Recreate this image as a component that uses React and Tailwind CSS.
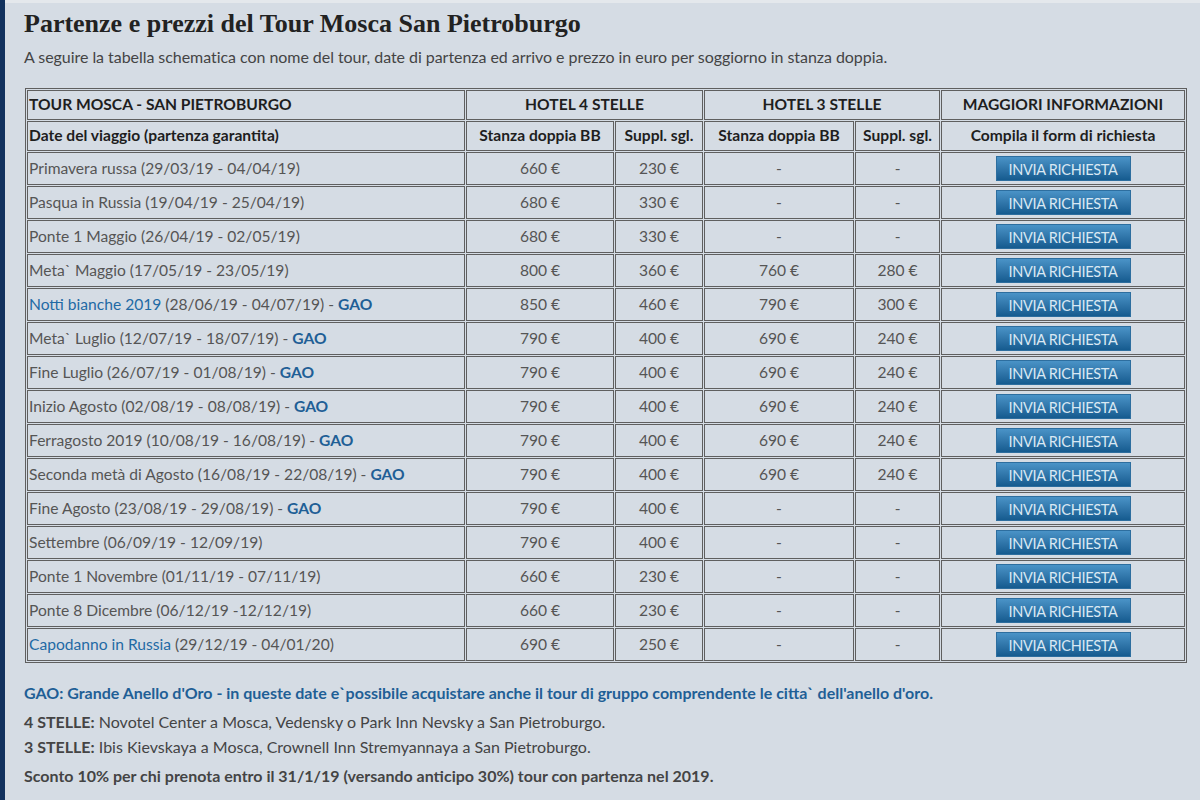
import React from "react";

const rows = [
  { name: "Primavera russa", link: false, date: "(29/03/19 - 04/04/19)", gao: false, a: "660 €", b: "230 €", c: "-", d: "-" },
  { name: "Pasqua in Russia", link: false, date: "(19/04/19 - 25/04/19)", gao: false, a: "680 €", b: "330 €", c: "-", d: "-" },
  { name: "Ponte 1 Maggio", link: false, date: "(26/04/19 - 02/05/19)", gao: false, a: "680 €", b: "330 €", c: "-", d: "-" },
  { name: "Meta` Maggio", link: false, date: "(17/05/19 - 23/05/19)", gao: false, a: "800 €", b: "360 €", c: "760 €", d: "280 €" },
  { name: "Notti bianche 2019", link: true, date: "(28/06/19 - 04/07/19)", gao: true, a: "850 €", b: "460 €", c: "790 €", d: "300 €" },
  { name: "Meta` Luglio", link: false, date: "(12/07/19 - 18/07/19)", gao: true, a: "790 €", b: "400 €", c: "690 €", d: "240 €" },
  { name: "Fine Luglio", link: false, date: "(26/07/19 - 01/08/19)", gao: true, a: "790 €", b: "400 €", c: "690 €", d: "240 €" },
  { name: "Inizio Agosto", link: false, date: "(02/08/19 - 08/08/19)", gao: true, a: "790 €", b: "400 €", c: "690 €", d: "240 €" },
  { name: "Ferragosto 2019", link: false, date: "(10/08/19 - 16/08/19)", gao: true, a: "790 €", b: "400 €", c: "690 €", d: "240 €" },
  { name: "Seconda metà di Agosto", link: false, date: "(16/08/19 - 22/08/19)", gao: true, a: "790 €", b: "400 €", c: "690 €", d: "240 €" },
  { name: "Fine Agosto", link: false, date: "(23/08/19 - 29/08/19)", gao: true, a: "790 €", b: "400 €", c: "-", d: "-" },
  { name: "Settembre", link: false, date: "(06/09/19 - 12/09/19)", gao: false, a: "790 €", b: "400 €", c: "-", d: "-" },
  { name: "Ponte 1 Novembre", link: false, date: "(01/11/19 - 07/11/19)", gao: false, a: "660 €", b: "230 €", c: "-", d: "-" },
  { name: "Ponte 8 Dicembre", link: false, date: "(06/12/19 -12/12/19)", gao: false, a: "660 €", b: "230 €", c: "-", d: "-" },
  { name: "Capodanno in Russia", link: true, date: "(29/12/19 - 04/01/20)", gao: false, a: "690 €", b: "250 €", c: "-", d: "-" },
];

const cell = "border border-[#5f5f5f] p-0";

export default function App() {
  return (
    <div
      className="w-[1200px] h-[800px] overflow-hidden flex bg-[#d5dce4]"
      style={{ fontFamily: "Lato, 'Open Sans', sans-serif" }}
    >
      <div className="w-[5px] shrink-0 bg-[#12325e]" />
      <div className="flex-1 flex flex-col">
        <div className="h-[3px] bg-[#e4e8ec]" />
        <div className="pl-[19px] pr-[12px]">
          <h1
            className="text-[26px] font-bold text-[#222] leading-[30px] mt-[6px]"
            style={{ fontFamily: "'Liberation Serif', 'Times New Roman', serif" }}
          >
            Partenze e prezzi del Tour Mosca San Pietroburgo
          </h1>
          <p className="text-[16px] text-[#444] leading-[20px] mt-[8px] tracking-[-0.05px]">
            A seguire la tabella schematica con nome del tour, date di partenza ed arrivo e prezzo in euro per soggiorno in stanza doppia.
          </p>
          <table
            className="mt-[21px] ml-[1px] table-fixed border border-[#5f5f5f] border-separate border-spacing-[1px] text-[15.6px] w-[1162px]"
          >
            <colgroup>
              <col className="w-[438px]" />
              <col className="w-[148px]" />
              <col className="w-[88px]" />
              <col className="w-[150px]" />
              <col className="w-[85px]" />
              <col />
            </colgroup>
            <thead>
              <tr className="h-[30px] font-bold text-[#1e1e1e]">
                <td className={cell + " pl-[1px] text-left"}>TOUR MOSCA - SAN PIETROBURGO</td>
                <td colSpan={2} className={cell + " text-center"}>HOTEL 4 STELLE</td>
                <td colSpan={2} className={cell + " text-center"}>HOTEL 3 STELLE</td>
                <td className={cell + " text-center"}>MAGGIORI INFORMAZIONI</td>
              </tr>
              <tr className="h-[30px] font-bold text-[#1e1e1e]">
                <td className={cell + " pl-[1px] text-left"}>Date del viaggio (partenza garantita)</td>
                <td className={cell + " text-center"}>Stanza doppia BB</td>
                <td className={cell + " text-center"}>Suppl. sgl.</td>
                <td className={cell + " text-center"}>Stanza doppia BB</td>
                <td className={cell + " text-center"}>Suppl. sgl.</td>
                <td className={cell + " text-center"}>Compila il form di richiesta</td>
              </tr>
            </thead>
            <tbody className="text-[#555]">
              {rows.map((r, i) => (
                <tr key={i} className="h-[33px]">
                  <td className={cell + " pl-[1px] text-left whitespace-nowrap"}>
                    {r.link ? (
                      <span className="text-[#1f6aa5]">{r.name}</span>
                    ) : (
                      <span>{r.name}</span>
                    )}{" "}
                    {r.date}
                    {r.gao && (
                      <>
                        {" - "}
                        <span className="font-bold text-[#1f5f96]">GAO</span>
                      </>
                    )}
                  </td>
                  <td className={cell + " text-center"}>{r.a}</td>
                  <td className={cell + " text-center"}>{r.b}</td>
                  <td className={cell + " text-center"}>{r.c}</td>
                  <td className={cell + " text-center"}>{r.d}</td>
                  <td className={cell + " text-center"}>
                    <button className="w-[135px] h-[25px] mt-[1px] text-[14.5px] leading-[25px] text-[#d9e8f3] bg-gradient-to-b from-[#4a93c7] to-[#155b8f] border border-[#2d6e9f] tracking-[-0.3px]">
                      INVIA RICHIESTA
                    </button>
                  </td>
                </tr>
              ))}
            </tbody>
          </table>
          <p className="mt-[20px] text-[16px] font-bold text-[#1f5f96] leading-[20px]">
            GAO: Grande Anello d'Oro - in queste date e`possibile acquistare anche il tour di gruppo comprendente le citta` dell'anello d'oro.
          </p>
          <p className="mt-[9px] text-[16px] text-[#444] leading-[20px]">
            <span className="font-bold">4 STELLE:</span> Novotel Center a Mosca, Vedensky o Park Inn Nevsky a San Pietroburgo.
          </p>
          <p className="mt-[5px] text-[16px] text-[#444] leading-[20px]">
            <span className="font-bold">3 STELLE:</span> Ibis Kievskaya a Mosca, Crownell Inn Stremyannaya a San Pietroburgo.
          </p>
          <p className="mt-[9px] text-[16px] font-bold text-[#444] leading-[20px]">
            Sconto 10% per chi prenota entro il 31/1/19 (versando anticipo 30%) tour con partenza nel 2019.
          </p>
        </div>
      </div>
    </div>
  );
}
